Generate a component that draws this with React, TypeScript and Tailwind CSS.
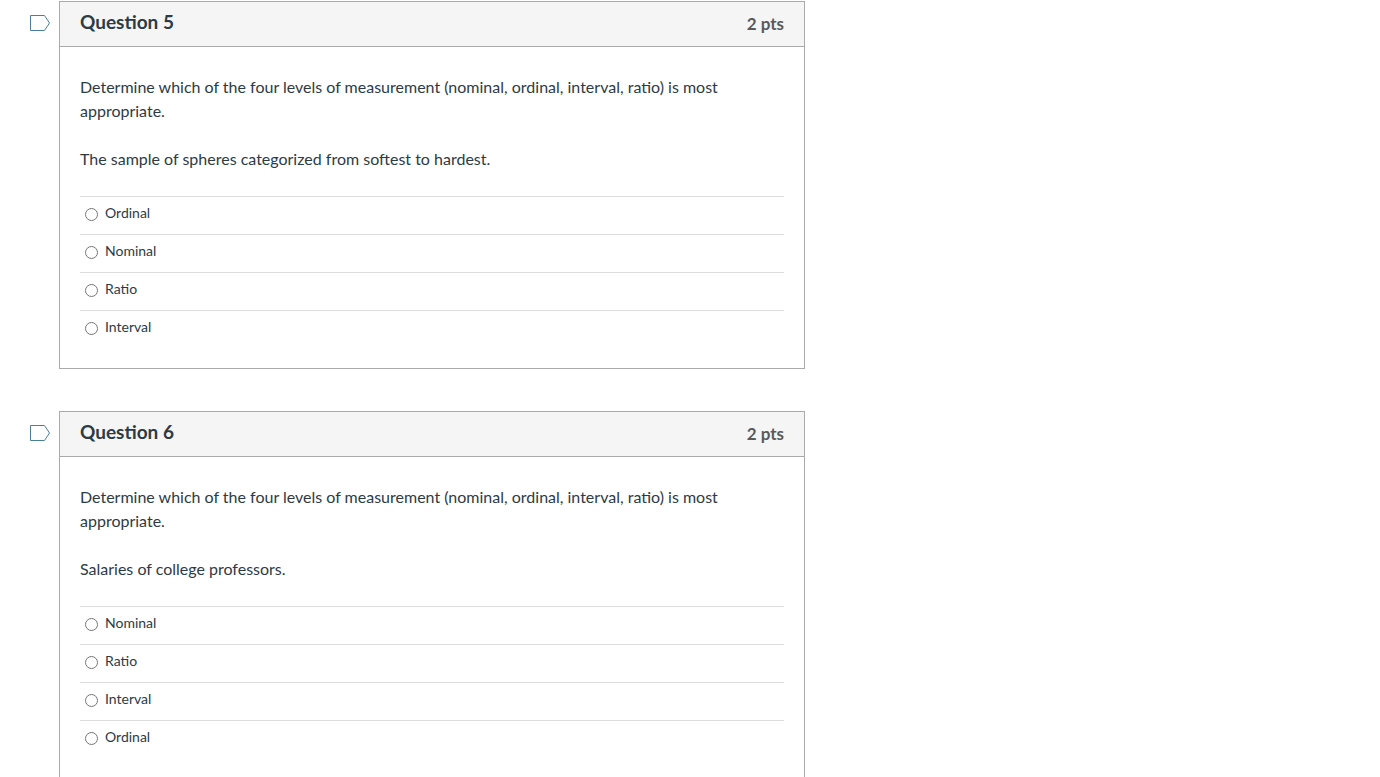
import { useState } from "react";

interface Question { id: string; title: string; points: number; prompt: string; detail: string; answers: string[] }

const PROMPT = "Determine which of the four levels of measurement (nominal, ordinal, interval, ratio) is most appropriate.";

const questions: Question[] = [
  {
    id: "q5", title: "Question 5", points: 2, prompt: PROMPT,
    detail: "The sample of spheres categorized from softest to hardest.",
    answers: ["Ordinal", "Nominal", "Ratio", "Interval"],
  },
  {
    id: "q6", title: "Question 6", points: 2, prompt: PROMPT,
    detail: "Salaries of college professors.",
    answers: ["Nominal", "Ratio", "Interval", "Ordinal"],
  },
];

function FlagButton({ title }: { title: string }) {
  const [flagged, setFlagged] = useState(false);

  return (
    <button type="button" onClick={() => setFlagged(!flagged)} aria-pressed={flagged} aria-label={`Flag ${title}`}
      className="mt-3 h-5 w-5 shrink-0 cursor-pointer">
      <svg viewBox="0 0 20 20" className="h-5 w-5" fill={flagged ? "#fcf0a4" : "none"} stroke="#4a7f9c">
        <path d="M0.5 2.5H14.5L19.5 10L14.5 17.5H0.5Z" />
      </svg>
    </button>
  );
}

function QuestionCard({ question }: { question: Question }) {
  const [selected, setSelected] = useState("");

  return (
    <div className="flex items-start gap-[9px]">
      <FlagButton title={question.title} />
      <section className="min-w-0 flex-1 border border-[#aaaaaa]">
        <header className="flex h-[45px] items-center justify-between border-b border-[#aaaaaa] bg-[#f5f5f5] px-5 font-bold">
          <h2 id={`${question.id}-title`} className="pb-1 text-[19px] leading-6">{question.title}</h2>
          <span className="text-[17px] leading-6 text-[#595959]">{question.points} pts</span>
        </header>

        <div className="px-5 pt-7 pb-5">
          <div className="space-y-6 text-base leading-6">
            <p>{question.prompt}</p>
            <p>{question.detail}</p>
          </div>

          <fieldset className="mt-[25px]" aria-labelledby={`${question.id}-title`}>
            {question.answers.map(a => (
              <label key={a} className="flex h-[38px] cursor-pointer items-center border-t border-[#dddddd] pb-0.5 pl-[5px] text-sm">
                <input type="radio" name={question.id} value={a} checked={selected === a} onChange={() => setSelected(a)}
                  className="mr-[7px] h-[13px] w-[13px]" />
                <span className="pb-1">{a}</span>
              </label>
            ))}
          </fieldset>
        </div>
      </section>
    </div>
  );
}

export default function App() {
  return (
    <main className="min-h-screen bg-white font-['Lato',sans-serif] text-[#2d3b45]">
      <div className="max-w-[805px] space-y-[42px] pt-px pl-[30px]">
        {questions.map(q => <QuestionCard key={q.id} question={q} />)}
      </div>
    </main>
  );
}
